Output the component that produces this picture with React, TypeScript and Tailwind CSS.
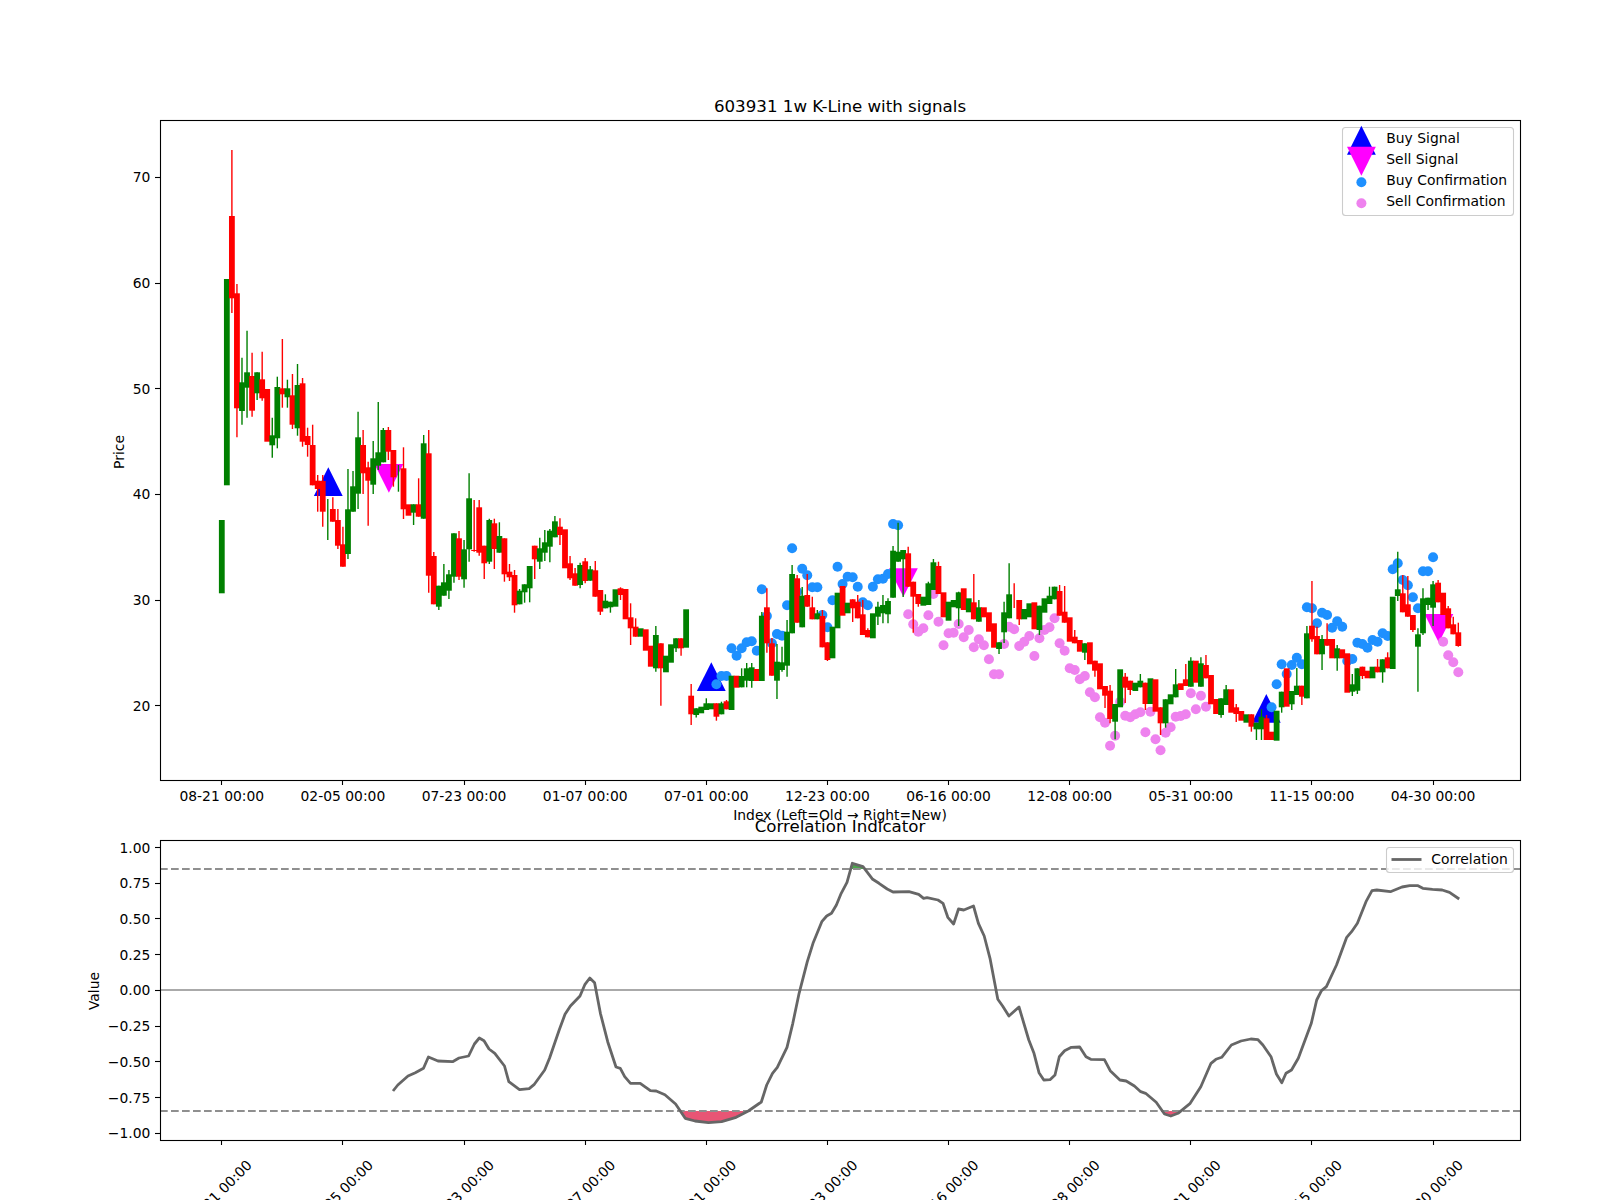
import React from 'react';

// candle rows: [colour, body top, body bottom, wick top, wick bottom] in figure pixels
type Candle = [string, number, number, number?, number?];

const candles: Candle[] = [
  ['g', 520, 593.3], ['g', 279, 485.3], ['r', 216, 298.3, 150, 313], ['r', 293.3, 408.3, 284, 437.3],
  ['g', 382.3, 411, 357.7, 424.7], ['g', 372.3, 387.7, 330.7, 417.7], ['r', 376, 410.7, 352.7, 416.7], ['g', 372.3, 393.3, 372.3, 400],
  ['r', 379.3, 398.3, 351.7, 400.7], ['r', 389, 441.7], ['g', 435.3, 445.3, 417.7, 457.7], ['g', 387, 438.3, 376.7, 448.3],
  ['r', 388.3, 394.3, 339, 407.7], ['g', 388.3, 397.3, 379.7, 407.7], ['r', 395.3, 424.7, 374, 429], ['g', 385, 428.3, 364, 435.7],
  ['r', 383.3, 441.7, 378, 446.7], ['r', 436, 445, 427.7, 456.7], ['r', 445, 485.3, 424.7, 485.3], ['r', 480.7, 489, 475, 511.7],
  ['r', 481, 511.7, 475, 526.7], ['g', 499, 499, 499, 540], ['r', 509, 521.7, 497.3, 521.7], ['r', 520, 545.7, 509, 549],
  ['r', 544.3, 566.7, 526.7, 566.7], ['g', 509.3, 554, 469, 559], ['g', 486.3, 511.7, 471, 511.7], ['g', 437.3, 493.7, 411.7, 509],
  ['r', 445, 473.3, 430, 494], ['r', 467.3, 480.7, 461.7, 525.7], ['g', 458.3, 484.7, 441, 494], ['g', 452.3, 465.7, 402, 470],
  ['g', 430, 462.3, 428, 462.3], ['r', 430, 451.7, 427, 460], ['r', 450, 477.3, 450, 486.7], ['g', 465, 465, 465, 491.7],
  ['r', 468.3, 509.3, 447.3, 519], ['r', 504.3, 515.7], ['g', 504.3, 512.7, 504.3, 525], ['r', 504.3, 516.7, 478.3, 516.7],
  ['g', 443.3, 518.7, 435, 518.7], ['r', 453.3, 575.7, 430, 592.7], ['r', 556, 604.3, 552, 604.3], ['g', 585.7, 606.7, 585.7, 610],
  ['g', 582.3, 595.7, 564, 595.7], ['g', 574.3, 590.7, 570, 599], ['g', 533.3, 576.7, 533.3, 582.7], ['r', 538.3, 576.7, 531, 580],
  ['g', 549.3, 579.3, 540, 587.7], ['g', 498.3, 549.3, 473.3, 561.7], ['r', 550, 551, 500, 551.7], ['r', 507.3, 552.7, 500, 555.7],
  ['r', 545.7, 563.3, 545.7, 579], ['g', 520, 561.7, 518.7, 564], ['r', 523.3, 549, 518.7, 569], ['g', 536, 552.7, 522.3, 552.7],
  ['r', 538.3, 574.3, 538.3, 581.7], ['r', 571.7, 577.3, 564, 581], ['r', 575, 605.3, 570, 612.7], ['g', 590.7, 604.3, 589, 604.3],
  ['g', 584.3, 592.3, 584.3, 602.7], ['g', 566, 588.3, 566, 602.3], ['r', 545.7, 559.3, 545.7, 579], ['g', 548.3, 561.7, 537.7, 569],
  ['g', 542.3, 552.7, 530, 561], ['g', 530.7, 546.7, 529, 562.3], ['g', 521.3, 537.3, 516, 537.3], ['r', 526.7, 535, 518.3, 545],
  ['r', 529.3, 568.3], ['r', 563.3, 578.3, 556, 580], ['r', 573.3, 585.7, 568, 585.7], ['g', 565, 585, 562.7, 588.3],
  ['r', 561.3, 581, 558, 583.3], ['g', 569.3, 580.7, 566, 580.7], ['r', 570.3, 596.7, 561, 596.7], ['r', 590, 611.7, 590, 615],
  ['g', 600.7, 608.3, 594.3, 608.3], ['g', 601.7, 607.3, 601.7, 612.7], ['g', 589.3, 606.7], ['r', 588.3, 595, 587.3, 600],
  ['r', 589, 619.3], ['r', 617.3, 628.3, 603.3, 645], ['r', 626.7, 636.7, 618.3, 636.7], ['g', 628.3, 636.7],
  ['r', 629.3, 650.7], ['r', 645.7, 666.7], ['g', 635, 668.3, 626, 671.7], ['r', 643.3, 668.3, 643.3, 705.7],
  ['g', 655.7, 672.3], ['g', 644.3, 662.7], ['g', 638.3, 648.3, 638.3, 652], ['r', 638.3, 648.3, 638.3, 655.7],
  ['g', 609.3, 647.7], ['r', 695.7, 714.3, 684, 725], ['g', 708.3, 715, 708.3, 717.5], ['g', 706.7, 713.3],
  ['g', 703.3, 710, 698.3, 710], ['g', 703.3, 709.3], ['r', 703.3, 716.7, 703.3, 720.7], ['g', 703.3, 714.3, 701.7, 714.3],
  ['r', 701.3, 709.3, 700, 709.3], ['g', 675.7, 710], ['r', 675.7, 687.7], ['g', 676, 687.3, 668.3, 687.3],
  ['g', 668.3, 680.7, 663, 687.3], ['g', 667.3, 681, 663, 687.7], ['r', 669, 681], ['g', 615.7, 681, 612, 681],
  ['r', 607.3, 643.3, 588.3, 652.7], ['r', 643.3, 675.7, 638, 675.7], ['g', 661.7, 680.7, 644, 699], ['g', 662.3, 670, 646.7, 671.7],
  ['g', 631.7, 665.7, 620, 676.7], ['g', 574, 633.3, 565, 633.3], ['r', 578.3, 622.7, 575, 622.7], ['g', 595.7, 627.3, 587, 627.3],
  ['r', 595, 606.7, 574, 606.7], ['r', 607.3, 619.3, 596.7, 619.3], ['g', 613.3, 619.3, 610, 619.3], ['r', 616, 647.3, 610, 647.3],
  ['r', 642.3, 660, 642.3, 661], ['g', 626.7, 658.3], ['g', 592.7, 628.3], ['r', 586, 615.7],
  ['g', 602.7, 613.3], ['r', 599.3, 608.3, 599.3, 622], ['r', 601.7, 618.3, 595, 618.3], ['r', 614.3, 635, 600, 635],
  ['r', 630, 637.3, 628.3, 637.3], ['g', 613.3, 638.3], ['g', 606.7, 616.7, 601.7, 625], ['g', 605, 613.3, 595, 623.3],
  ['g', 601, 614.3, 598.3, 623.3], ['g', 550.7, 597.7, 546, 597.7], ['g', 551.7, 561.7, 522.7, 561.7], ['g', 550, 559.3, 550, 597],
  ['r', 553.3, 586.7, 546.7, 586.7], ['r', 581.7, 596.7, 581.7, 632.7], ['r', 594, 604, 594, 606.7], ['g', 596.7, 605.7],
  ['g', 583.3, 605, 581.7, 605], ['g', 562.3, 590, 559, 590], ['r', 566, 594, 561.7, 594], ['r', 592.3, 617.3],
  ['g', 601.7, 620.7], ['g', 600, 607.3], ['g', 592.3, 608.3, 591.7, 626], ['r', 588.3, 610],
  ['g', 598.3, 612.3], ['r', 602.3, 619.3, 574, 619.3], ['g', 607.3, 621.7, 600, 621.7], ['r', 607.3, 617.3],
  ['r', 612.3, 631.7], ['r', 623.3, 647.7], ['g', 642.3, 649, 642.3, 654], ['g', 612.3, 632.3, 601.7, 643],
  ['g', 594.3, 618.3, 563.3, 618.3], ['r', 583.3, 583.3, 583.3, 608], ['r', 600, 619.3, 600, 625], ['g', 609, 619.3],
  ['g', 603.3, 617.3], ['r', 602.3, 629.3], ['g', 605.7, 630, 605.7, 635], ['g', 598.3, 612.7],
  ['g', 595.7, 604, 586.7, 604], ['g', 586.7, 599.3, 586.7, 599.3], ['r', 591, 615.7, 585, 615.7], ['r', 611.7, 622.7, 586, 622.7],
  ['r', 617.3, 641.7], ['r', 636.7, 643.3, 630, 643.3], ['r', 640, 651.7], ['g', 643.3, 652.7, 643.3, 660],
  ['r', 642.3, 664.3], ['r', 660.7, 670.7, 660.7, 676.7], ['r', 663.3, 689.3], ['r', 686, 695.7, 686, 708],
  ['r', 690.7, 719, 685, 723.3], ['g', 704, 721.7, 704, 739.3], ['g', 669.3, 707.3], ['r', 676.7, 687.7, 673, 703],
  ['r', 680.7, 690, 680.7, 695], ['g', 682.7, 691], ['g', 680.7, 687.3, 674, 687.3], ['r', 682.7, 704, 682.7, 710],
  ['g', 678.3, 704], ['r', 679.3, 711.7], ['r', 707.3, 723.3, 707.3, 735], ['g', 699.3, 723.3, 699.3, 727.7],
  ['g', 694.3, 704.3], ['g', 684.3, 697.3, 669, 697.3], ['r', 683.3, 690], ['r', 679.3, 686, 664, 686],
  ['g', 660.7, 686.7, 657.3, 686.7], ['r', 660.7, 682.7], ['g', 663.3, 686.7, 657.3, 686.7], ['r', 665, 678.3, 655, 678.3],
  ['r', 675, 704.3], ['r', 699, 714], ['g', 698.3, 715, 698.3, 717.7], ['g', 689.3, 705, 685, 705],
  ['r', 689.3, 712.7], ['r', 707.3, 714, 704, 722], ['r', 711, 720.7], ['g', 714.3, 722.7],
  ['r', 714.3, 726.7, 714.3, 731.7], ['g', 722.7, 729.3, 722.7, 740], ['g', 716.7, 729.3, 709.3, 740], ['r', 718.3, 740, 715, 740],
  ['r', 731.7, 740], ['g', 710.7, 740.7], ['g', 691.7, 707.3, 691.7, 712.7], ['r', 668.3, 706.7],
  ['g', 691, 704.3, 691, 710], ['g', 685.7, 695, 668, 695], ['r', 685.7, 696.7, 685.7, 705], ['g', 633.3, 698.3, 626, 698.3],
  ['r', 625.7, 639.3, 581, 641.7], ['r', 636, 654.3, 626.7, 654.3], ['g', 639, 654.3, 635, 670], ['r', 639, 645.7, 623.3, 645.7],
  ['r', 639, 658.3], ['g', 648.3, 658.3, 645, 670.7], ['r', 649.3, 658.3], ['r', 653.3, 692.7],
  ['g', 684.3, 691.7, 674, 696], ['g', 668.3, 690.7, 668.3, 694], ['r', 666.7, 676, 666.7, 679], ['r', 670.7, 678.3],
  ['g', 666.7, 678.3], ['r', 666.7, 672.3, 659, 672.3], ['g', 659.3, 672.3, 659.3, 682.7], ['r', 657.3, 668.3, 652.3, 668.3],
  ['g', 596.7, 669], ['g', 589.3, 596, 551.7, 601], ['r', 593.3, 612.3, 575, 612.3], ['r', 604.3, 616.7, 576, 616.7],
  ['r', 615, 630, 615, 632], ['g', 634.3, 646.7, 628.3, 691.7], ['g', 598.3, 633.3, 588.3, 635], ['g', 597.7, 605, 597.7, 610],
  ['g', 584.3, 607.7, 581, 626], ['r', 582.7, 602.3, 580, 602.3], ['r', 592.7, 615], ['r', 608.3, 628.3, 606, 628.3],
  ['r', 624.3, 634.3, 616.7, 634.3], ['r', 632.3, 646, 622.7, 646.7],
];

// confirmation dots: [bar index, y]
const buyDots: [number, number][] = [
  [98, 684.3], [99, 676], [100, 676], [101, 648.3], [102, 655.7], [103, 648.3], [104, 642.3], [105, 641.3], [106, 650.7],
  [107, 589.3], [108, 616], [109, 643.3], [110, 634], [111, 635.7], [112, 605.3], [113, 548.3], [114, 591.7], [115, 568.7],
  [116, 575.3], [117, 587.3], [118, 587.3], [119, 615], [120, 627.3], [121, 600.3], [122, 566.7], [123, 584], [124, 576.7],
  [125, 577.3], [126, 586.7], [127, 602.3], [128, 605.3], [129, 586.7], [130, 579.3], [131, 578.7], [132, 574], [133, 524],
  [134, 525.3], [208, 707.3], [209, 684.3], [210, 664.3], [211, 674], [212, 665], [213, 657.7], [214, 664.3], [215, 607.3],
  [216, 608.3], [217, 623.3], [218, 612.7], [219, 615], [220, 627.7], [221, 621.3], [222, 626.7], [223, 661], [224, 659],
  [225, 642.7], [226, 644], [227, 647.7], [228, 640], [229, 641.7], [230, 633.3], [231, 636], [232, 569.3], [233, 563.3],
  [234, 580], [235, 585.3], [236, 597.3], [237, 608.3], [238, 571.3], [239, 571.3], [240, 557.3],
];

const sellDots: [number, number][] = [
  [136, 614.3], [137, 624.3], [138, 631.7], [139, 628.3], [140, 615.3], [141, 594], [142, 621.7], [143, 645.3], [144, 633.3],
  [145, 632.7], [146, 624], [147, 637.3], [148, 630], [149, 647.3], [150, 639.3], [151, 645.3], [152, 659.3], [153, 674.3],
  [154, 674.3], [155, 644], [156, 626.7], [157, 629.3], [158, 646], [159, 641.7], [160, 636], [161, 656], [162, 638.3],
  [163, 630], [164, 627.3], [165, 618.3], [166, 643.3], [167, 650.7], [168, 668.3], [169, 670], [170, 679.3], [171, 676],
  [172, 692.3], [173, 697.3], [174, 717.3], [175, 722.7], [176, 745.7], [177, 735.7], [178, 701.7], [179, 715.7], [180, 717.3],
  [181, 714.3], [182, 712.3], [183, 732.3], [184, 711.7], [185, 739.3], [186, 750.3], [187, 732.7], [188, 727.3], [189, 716.7],
  [190, 716], [191, 714.3], [192, 693.3], [193, 709.3], [194, 695.7], [195, 706.7], [242, 641.7], [243, 655.3], [244, 662.3],
  [245, 672.3],
];

const corr = `393,1091 397.8,1085 408,1076 415.3,1072.7 423.5,1068.3 428.4,1057 438,1061 452.6,1061.7 459,1058 468.6,1056
474.4,1044 479.3,1038 484,1040.7 489,1049 494.8,1053.3 504.5,1066 508.8,1081.7 519.5,1089.7 529.2,1088.7 534,1084.7
544.7,1070 549.5,1058.3 559.2,1030 565,1014.3 570.4,1006 580,996 585,984.3 589.8,978 594.6,982.7 600.4,1013.3
607.7,1041.7 616,1067 620.3,1068.3 624.7,1076.7 630.5,1083.3 640.2,1083.3 650.4,1090.7 656.2,1091 664.9,1094.7 675.6,1104
685.2,1118.3 695,1121 708.5,1122.7 721.6,1121.7 736.1,1117.3 748.3,1111 761.3,1102 766.7,1085 772.5,1073.3 777.3,1067.3
787,1047.3 792.8,1023.3 799.1,993.3 807.3,961.7 813,943.3 821.8,921.7 826.7,916 831.5,913.3 836.4,905 841.2,893.3
847,882.3 852.3,863.3 863,866.7 872.7,879.3 879,883.3 887.2,889 893,892 909,891.7 918.7,894.3 923.6,898.3
927,897.7 938,900 943,903.3 947.8,917.3 953.6,924 958.5,909 963.8,910 973.5,906 978.4,923.3 984.2,936
990,958.3 997.8,999.3 1002.6,1006 1008.9,1016 1019,1007 1028.8,1040 1034,1053.3 1039,1072.7 1043.8,1080 1050,1079.7
1055,1075 1059.3,1056.7 1064.6,1050.7 1071.4,1047.3 1079.7,1047 1086,1056.7 1090.8,1059.3 1104.4,1059.7 1110.2,1070.7 1119.9,1080
1126.2,1081 1134.4,1086 1140.7,1091.7 1145.6,1093.3 1156.2,1102.3 1164.5,1114 1170.8,1116 1178,1113.3 1190.2,1103.3 1200.8,1086.7
1211,1063.3 1215.9,1059.3 1221.7,1057.3 1231.4,1045 1241,1041 1250.8,1039 1258,1039.7 1262.9,1045 1271,1056.7 1276.4,1074
1281.8,1082.7 1286,1073.3 1291.5,1070 1298.3,1058.3 1311.3,1023.3 1316.7,1000 1321.5,990.7 1326.4,986.7 1336.5,965 1346.7,937.3
1351.6,931.7 1357.4,923.3 1366,901.7 1372,890.7 1376.8,890 1390.4,891.7 1402,887 1409.7,885.7 1418,885.7 1422.8,888.3
1432.5,889.3 1442.2,890 1449.5,892.3 1459.2,899`;

const dates = ['08-21', '02-05', '07-23', '01-07', '07-01', '12-23', '06-16', '12-08', '05-31', '11-15', '04-30'];
const priceTicks: [string, number][] = [['70', 177.3], ['60', 283], ['50', 388.5], ['40', 494.3], ['30', 600], ['20', 705.6]];
const valueTicks: [string, number][] = [
  ['1.00', 847.6], ['0.75', 883], ['0.50', 918.8], ['0.25', 954.5], ['0.00', 990.3],
  ['\u22120.25', 1026], ['\u22120.50', 1061.8], ['\u22120.75', 1097.5], ['\u22121.00', 1133.3],
];

const barX = (i: number) => 221.8 + 5.047 * i;
const tickX = dates.map((_, k) => barX(k * 24));
const snap = (v: number) => Math.floor(v) + 0.5;

function Triangle({ x, apex, base, color }: { x: number; apex: number; base: number; color: string }) {
  return <polygon points={`${x},${apex} ${x - 14.4},${base} ${x + 14.4},${base}`} fill={color} />;
}

function YTicks({ ticks }: { ticks: [string, number][] }) {
  return (
    <>
      {ticks.map(([label, y]) => (
        <g key={label}>
          <line x1={155} x2={160} y1={snap(y)} y2={snap(y)} stroke="black" strokeWidth={1.1} />
          <text x={150.3} y={y + 5} textAnchor="end" className="fill-black text-[13.89px]">{label}</text>
        </g>
      ))}
    </>
  );
}

function PriceChart() {
  return (
    <svg viewBox="0 0 1600 810" className="block h-[810px] w-[1600px] shrink-0 overflow-visible font-['DejaVu_Sans',sans-serif]">
      <text x={840} y={112} textAnchor="middle" className="fill-black text-[16.67px]">603931 1w K-Line with signals</text>

      {/* signals sit under the dots, dots under the candles */}
      <Triangle x={328.3} apex={467.3} base={496} color="#0000ff" />
      <Triangle x={711.3} apex={662.3} base={691} color="#0000ff" />
      <Triangle x={1266.3} apex={694} base={722.7} color="#0000ff" />
      <Triangle x={388.9} apex={492.7} base={464} color="#ff00ff" />
      <Triangle x={903.4} apex={596.7} base={568.3} color="#ff00ff" />
      <Triangle x={1438.9} apex={642.7} base={614} color="#ff00ff" />
      {buyDots.map(([i, y]) => <circle key={i} cx={barX(i)} cy={y} r={5} fill="#1e90ff" />)}
      {sellDots.map(([i, y]) => <circle key={i} cx={barX(i)} cy={y} r={5} fill="#ee82ee" />)}

      {candles.map(([c, top, bottom, hi, lo], i) => {
        const color = c === 'r' ? '#ff0000' : '#008000';
        const x = barX(i);
        return (
          <g key={i}>
            {(hi !== undefined || lo !== undefined) && (
              <line x1={x} x2={x} y1={hi ?? top} y2={lo ?? bottom} stroke={color} strokeWidth={1.4} />
            )}
            {bottom > top && <rect x={x - 2.9} y={top} width={5.8} height={bottom - top} fill={color} />}
          </g>
        );
      })}

      <rect x={160.5} y={120.5} width={1360} height={660} fill="none" stroke="black" strokeWidth={1.1} />
      <YTicks ticks={priceTicks} />
      {dates.map((d, k) => (
        <g key={d}>
          <line x1={snap(tickX[k])} x2={snap(tickX[k])} y1={780} y2={785} stroke="black" strokeWidth={1.1} />
          <text x={tickX[k]} y={801} textAnchor="middle" className="fill-black text-[13.89px]">{d} 00:00</text>
        </g>
      ))}
      <text x={840} y={820} textAnchor="middle" className="fill-black text-[13.89px]">Index (Left=Old → Right=New)</text>
      <text transform="translate(124 452) rotate(-90)" textAnchor="middle" className="fill-black text-[13.89px]">Price</text>

      {/* legend */}
      <rect x={1342.5} y={127.5} width={171} height={88} rx={3} fill="white" fillOpacity={0.8} stroke="#cccccc" strokeWidth={1.1} />
      <Triangle x={1361.4} apex={125.7} base={154.7} color="#0000ff" />
      <Triangle x={1361.4} apex={175.7} base={146.7} color="#ff00ff" />
      <circle cx={1361.4} cy={182.3} r={5} fill="#1e90ff" />
      <circle cx={1361.4} cy={203.3} r={5} fill="#ee82ee" />
      <text x={1386.3} y={143.3} className="fill-black text-[13.89px]">Buy Signal</text>
      <text x={1386.3} y={164.3} className="fill-black text-[13.89px]">Sell Signal</text>
      <text x={1386.3} y={185.3} className="fill-black text-[13.89px]">Buy Confirmation</text>
      <text x={1386.3} y={206.3} className="fill-black text-[13.89px]">Sell Confirmation</text>
    </svg>
  );
}

function CorrelationChart() {
  return (
    <svg viewBox="0 810 1600 390" className="block h-[390px] w-[1600px] shrink-0 overflow-visible font-['DejaVu_Sans',sans-serif]">
      <text x={840} y={832} textAnchor="middle" className="fill-black text-[16.67px]">Correlation Indicator</text>

      <polygon points="680.3,1111 685.2,1118.3 695,1121 708.5,1122.7 721.6,1121.7 736.1,1117.3 748.3,1111" fill="#e85575" />
      <polygon points="1162.4,1111 1164.5,1114 1170.8,1116 1178,1113.3 1180.8,1111" fill="#e85575" />
      <polygon points="851.7,869 852.3,863.3 863,866.7 864.6,869" fill="#4ca64c" />

      <line x1={160} x2={1520} y1={990} y2={990} stroke="#aaaaaa" strokeWidth={2.1} />
      <line x1={160} x2={1520} y1={869} y2={869} stroke="#8f8f8f" strokeWidth={2.1} strokeDasharray="7.7 3.3" />
      <line x1={160} x2={1520} y1={1111} y2={1111} stroke="#8f8f8f" strokeWidth={2.1} strokeDasharray="7.7 3.3" />
      <polyline points={corr} fill="none" stroke="#666666" strokeWidth={2.8} strokeLinejoin="round" />

      <rect x={160.5} y={840.5} width={1360} height={300} fill="none" stroke="black" strokeWidth={1.1} />
      <YTicks ticks={valueTicks} />
      {dates.map((d, k) => (
        <g key={d}>
          <line x1={snap(tickX[k])} x2={snap(tickX[k])} y1={1140} y2={1145} stroke="black" strokeWidth={1.1} />
          <text transform={`translate(${tickX[k] + 1} 1196) rotate(-45)`} textAnchor="middle" className="fill-black text-[13.89px]">{d} 00:00</text>
        </g>
      ))}
      <text transform="translate(99 991) rotate(-90)" textAnchor="middle" className="fill-black text-[13.89px]">Value</text>

      {/* legend */}
      <rect x={1386.5} y={847.5} width={127} height={25} rx={3} fill="white" fillOpacity={0.8} stroke="#cccccc" strokeWidth={1.1} />
      <line x1={1391.5} x2={1421.5} y1={859.5} y2={859.5} stroke="#666666" strokeWidth={2.8} />
      <text x={1431.3} y={864} className="fill-black text-[13.89px]">Correlation</text>
    </svg>
  );
}

export default function App() {
  return (
    <div className="flex h-[1200px] w-[1600px] flex-col overflow-hidden bg-white">
      <PriceChart />
      <CorrelationChart />
    </div>
  );
}
